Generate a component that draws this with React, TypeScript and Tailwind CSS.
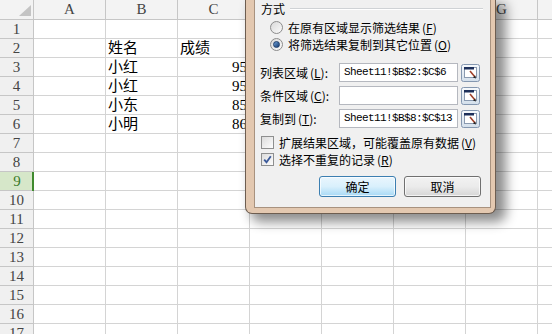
import type { ReactNode } from 'react'

const COLS = ['A', 'B', 'C', 'D', 'E', 'F', 'G', 'H']
const ROW_COUNT = 17
const ACTIVE_ROW = 9

const DATA: Record<number, { name: string; score: string; numeric: boolean }> = {
  2: { name: '姓名', score: '成绩', numeric: false },
  3: { name: '小红', score: '95', numeric: true },
  4: { name: '小红', score: '95', numeric: true },
  5: { name: '小东', score: '85', numeric: true },
  6: { name: '小明', score: '86', numeric: true },
}

const sheetFont = { fontFamily: '"Liberation Serif", "Noto Sans CJK SC", serif' }
const uiFont = { fontFamily: '"Noto Sans CJK SC", "Liberation Sans", sans-serif' }

function Key({ k }: { k: string }) {
  return (
    <span className="ml-[2px]">
      (<span className="underline">{k}</span>)
    </span>
  )
}

function RangeButton() {
  return (
    <svg width="19" height="18" viewBox="0 0 19 18" className="shrink-0">
      <defs>
        <linearGradient id="rb" x1="0" y1="0" x2="0" y2="1">
          <stop offset="0" stopColor="#f6f9fc" />
          <stop offset="1" stopColor="#d3dfeb" />
        </linearGradient>
      </defs>
      <rect x="0.5" y="0.5" width="18" height="17" rx="2" fill="url(#rb)" stroke="#8497b0" />
      <rect x="3.5" y="3.5" width="12" height="10" fill="#ffffff" stroke="#8a9ab0" />
      <rect x="3" y="3" width="10" height="2.5" fill="#1d2f5a" />
      <path d="M9 7 L14 13" stroke="#a0402a" strokeWidth="1.6" />
      <path d="M12 13.5 L15 14.5 L14.2 11.5 Z" fill="#222" />
    </svg>
  )
}

function Radio({ checked }: { checked?: boolean }) {
  return (
    <span className="flex h-[13px] w-[13px] shrink-0 items-center justify-center rounded-full border border-[#8c8c8c] bg-gradient-to-br from-[#d9d9d9] to-[#fbfbfb]">
      {checked && (
        <span className="h-[7px] w-[7px] rounded-full border border-[#1c3d6b] bg-gradient-to-br from-[#6fa1d6] to-[#173c72]" />
      )}
    </span>
  )
}

function Checkbox({ checked }: { checked?: boolean }) {
  return (
    <span className="flex h-[13px] w-[13px] shrink-0 items-center justify-center border border-[#8e8f8f] bg-gradient-to-br from-[#dcdcdc] to-[#fdfdfd]">
      {checked && (
        <svg width="9" height="9" viewBox="0 0 9 9">
          <path d="M1.2 4.6 L3.5 7.2 L7.8 1.2" fill="none" stroke="#3b5a9a" strokeWidth="1.8" />
        </svg>
      )}
    </span>
  )
}

function Field({ label, k, value }: { label: string; k: string; value: string }) {
  return (
    <div className="flex h-[19px] items-center pl-[5px]">
      <span className="w-[79px] shrink-0 whitespace-nowrap">
        {label}
        <Key k={k} />:
      </span>
      <div
        className="flex h-[19px] w-[119px] items-center border border-[#b5b8bf] bg-white pl-[4px] text-[11px] tracking-[-0.6px] whitespace-nowrap"
        style={{ fontFamily: '"Liberation Mono", monospace' }}
      >
        {value}
      </div>
      <span className="ml-[3px]">
        <RangeButton />
      </span>
    </div>
  )
}

function Option({ control, children }: { control: ReactNode; children: ReactNode }) {
  return (
    <div className="flex h-[17px] items-center gap-[5px] whitespace-nowrap">
      {control}
      <span>{children}</span>
    </div>
  )
}

function FilterDialog() {
  return (
    <div
      className="absolute top-0 left-[245px] h-[214px] w-[251px] rounded-b-[7px] border border-t-0 border-[#6d5d50] bg-[#e3c8b0] pr-[4px] pb-[5px] pl-[8px] shadow-[8px_6px_12px_2px_rgba(0,0,0,0.45)]"
      style={uiFont}
    >
      <div className="flex h-full flex-col border border-t-0 border-[#a8927f] bg-[#f0f0f0] text-[12px] leading-none text-black">
        {/* 方式 group */}
        <div className="flex h-[18px] items-center pl-[6px]">
          <span>方式</span>
          <div className="mr-[7px] ml-[5px] h-[2px] flex-1 border-t border-b border-t-[#cfd2d5] border-b-white" />
        </div>
        <div className="mt-[1px] pl-[15px]">
          <Option control={<Radio />}>
            在原有区域显示筛选结果<Key k="F" />
          </Option>
          <Option control={<Radio checked />}>
            将筛选结果复制到其它位置<Key k="O" />
          </Option>
        </div>

        {/* ranges */}
        <div className="mt-[10px] flex flex-col gap-[4px]">
          <Field label="列表区域" k="L" value="Sheet11!$B$2:$C$6" />
          <Field label="条件区域" k="C" value="" />
          <Field label="复制到" k="T" value="Sheet11!$B$8:$C$13" />
        </div>

        <div className="mt-[6px] pl-[6px]">
          <Option control={<Checkbox />}>
            扩展结果区域，可能覆盖原有数据<Key k="V" />
          </Option>
          <Option control={<Checkbox checked />}>
            选择不重复的记录<Key k="R" />
          </Option>
        </div>

        <div className="mt-[8px] flex justify-end gap-[8px] pr-[9px]">
          <button className="flex h-[21px] w-[77px] items-center justify-center rounded-[3px] border border-[#3c7fb1] bg-gradient-to-b from-[#eaf6fd] via-[#d9f0fc] to-[#a7d9f5] shadow-[inset_0_0_0_1px_rgba(255,255,255,0.7)]">
            确定
          </button>
          <button className="flex h-[21px] w-[77px] items-center justify-center rounded-[3px] border border-[#707070] bg-gradient-to-b from-[#f2f2f2] via-[#ebebeb] to-[#d6d6d6] shadow-[inset_0_0_0_1px_rgba(255,255,255,0.7)]">
            取消
          </button>
        </div>
      </div>
    </div>
  )
}

export default function App() {
  const rows = Array.from({ length: ROW_COUNT }, (_, i) => i + 1)

  return (
    <div className="relative h-[334px] w-[552px] overflow-hidden bg-white" style={sheetFont}>
      {/* column headers */}
      <div className="flex h-[20px]">
        <div className="relative h-[20px] w-[34px] shrink-0 border-r border-b border-[#c6c6c6] bg-[#f3f3f3]">
          <svg width="12" height="11" viewBox="0 0 12 11" className="absolute top-[5px] left-[19px]">
            <path d="M12 0 L12 11 L0 11 Z" fill="#c4c4c4" />
          </svg>
        </div>
        {COLS.map((c) => (
          <div
            key={c}
            className="flex h-[20px] w-[72px] shrink-0 items-center justify-center border-r border-b border-[#c6c6c6] bg-[#f3f3f3] text-[15px] text-[#444]"
          >
            {c === 'H' ? '' : c}
          </div>
        ))}
      </div>

      {/* rows */}
      {rows.map((r) => {
        const d = DATA[r]
        const active = r === ACTIVE_ROW
        return (
          <div key={r} className="flex h-[19px]">
            <div
              className={
                active
                  ? 'flex h-[19px] w-[34px] shrink-0 items-center justify-center border-b border-[#c6c6c6] bg-[#d6e7c9] text-[15px] text-[#3a7a2a]'
                  : 'flex h-[19px] w-[34px] shrink-0 items-center justify-center border-r border-b border-[#c6c6c6] bg-[#f0f0f0] text-[15px] text-[#444]'
              }
            >
              {r}
            </div>
            {active && <div className="-ml-[2px] h-[19px] w-[2px] shrink-0 bg-[#3f8a2e]" />}
            {COLS.map((c) => (
              <div
                key={c}
                className={
                  'flex h-[19px] w-[72px] shrink-0 items-end overflow-hidden border-r border-b border-[#d4d4d4] px-[2px] text-[15px] leading-[18px] whitespace-nowrap text-black ' +
                  (c === 'C' && d?.numeric ? 'justify-end' : 'justify-start')
                }
              >
                {d && c === 'B' ? d.name : d && c === 'C' ? d.score : ''}
              </div>
            ))}
          </div>
        )
      })}

      <FilterDialog />
    </div>
  )
}
